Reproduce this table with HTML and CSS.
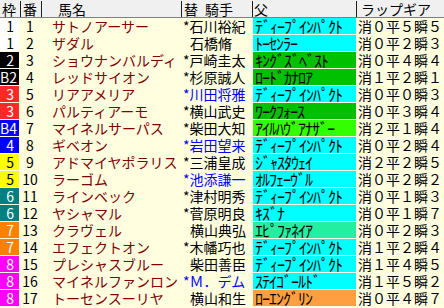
FILE: index.html
```html
<!DOCTYPE html>
<html lang="ja">
<head>
<meta charset="utf-8">
<link rel="stylesheet" href="styles.css">
</head>
<body>
<div class="table">
  <div class="head">
    <div class="h h-waku">枠</div>
    <div class="h h-ban sep">番</div>
    <div class="h h-name sep">馬名</div>
    <div class="h h-jockey sep">替<span class="gap"></span>騎手</div>
    <div class="h h-sire sep">父</div>
    <div class="h h-lap sep">ラップギア</div>
  </div>
  <div class="body">
    <div class="row"><div class="waku w1">1</div><div class="ban">1</div><div class="name">サトノアーサー</div><div class="jockey">*石川裕紀</div><div class="sire cyan">ﾃﾞｨｰﾌﾟｲﾝﾊﾟｸﾄ</div><div class="lap">消０平５瞬５</div></div>
    <div class="row"><div class="waku w1">1</div><div class="ban">2</div><div class="name">ザダル</div><div class="jockey"><span class="sp"></span>石橋脩</div><div class="sire cyan">ﾄｰｾﾝﾗｰ</div><div class="lap">消０平２瞬３</div></div>
    <div class="row"><div class="waku w2">2</div><div class="ban">3</div><div class="name">ショウナンバルディ</div><div class="jockey">*戸崎圭太</div><div class="sire green">ｷﾝｸﾞｽﾞﾍﾞｽﾄ</div><div class="lap">消０平４瞬４</div></div>
    <div class="row"><div class="waku w2">B2</div><div class="ban">4</div><div class="name">レッドサイオン</div><div class="jockey">*杉原誠人</div><div class="sire green">ﾛｰﾄﾞｶﾅﾛｱ</div><div class="lap">消１平２瞬１</div></div>
    <div class="row"><div class="waku w3">3</div><div class="ban">5</div><div class="name">リアアメリア</div><div class="jockey blue">*川田将雅</div><div class="sire cyan">ﾃﾞｨｰﾌﾟｲﾝﾊﾟｸﾄ</div><div class="lap">消０平０瞬３</div></div>
    <div class="row"><div class="waku w3">3</div><div class="ban">6</div><div class="name">パルティアーモ</div><div class="jockey">*横山武史</div><div class="sire green">ﾜｰｸﾌｫｰｽ</div><div class="lap">消０平３瞬４</div></div>
    <div class="row"><div class="waku w4">B4</div><div class="ban">7</div><div class="name">マイネルサーパス</div><div class="jockey">*柴田大知</div><div class="sire lime">ｱｲﾙﾊｳﾞｱﾅｻﾞｰ</div><div class="lap">消２平１瞬４</div></div>
    <div class="row"><div class="waku w4">4</div><div class="ban">8</div><div class="name">ギベオン</div><div class="jockey blue">*岩田望来</div><div class="sire cyan">ﾃﾞｨｰﾌﾟｲﾝﾊﾟｸﾄ</div><div class="lap">消０平２瞬４</div></div>
    <div class="row"><div class="waku w5">5</div><div class="ban">9</div><div class="name">アドマイヤポラリス</div><div class="jockey">*三浦皇成</div><div class="sire cyan">ｼﾞｬｽﾀｳｪｲ</div><div class="lap">消２平２瞬５</div></div>
    <div class="row"><div class="waku w5">5</div><div class="ban">10</div><div class="name">ラーゴム</div><div class="jockey blue">*池添謙一</div><div class="sire cyan">ｵﾙﾌｪｰｳﾞﾙ</div><div class="lap">消０平２瞬２</div></div>
    <div class="row"><div class="waku w6">6</div><div class="ban">11</div><div class="name">ラインベック</div><div class="jockey">*津村明秀</div><div class="sire cyan">ﾃﾞｨｰﾌﾟｲﾝﾊﾟｸﾄ</div><div class="lap">消０平１瞬３</div></div>
    <div class="row"><div class="waku w6">6</div><div class="ban">12</div><div class="name">ヤシャマル</div><div class="jockey">*菅原明良</div><div class="sire cyan">ｷｽﾞﾅ</div><div class="lap">消０平１瞬７</div></div>
    <div class="row"><div class="waku w7">7</div><div class="ban">13</div><div class="name">クラヴェル</div><div class="jockey"><span class="sp"></span>横山典弘</div><div class="sire spring">ｴﾋﾟﾌｧﾈｲｱ</div><div class="lap">消０平２瞬３</div></div>
    <div class="row"><div class="waku w7">7</div><div class="ban">14</div><div class="name">エフェクトオン</div><div class="jockey">*木幡巧也</div><div class="sire cyan">ﾃﾞｨｰﾌﾟｲﾝﾊﾟｸﾄ</div><div class="lap">消１平２瞬４</div></div>
    <div class="row"><div class="waku w8">8</div><div class="ban">15</div><div class="name">プレシャスブルー</div><div class="jockey"><span class="sp"></span>柴田善臣</div><div class="sire cyan">ﾃﾞｨｰﾌﾟｲﾝﾊﾟｸﾄ</div><div class="lap">消１平４瞬５</div></div>
    <div class="row"><div class="waku w8">8</div><div class="ban">16</div><div class="name">マイネルファンロン</div><div class="jockey blue">*Ｍ．デム</div><div class="sire cyan">ｽﾃｲｺﾞｰﾙﾄﾞ</div><div class="lap">消１平５瞬２</div></div>
    <div class="row"><div class="waku w8">8</div><div class="ban">17</div><div class="name">トーセンスーリヤ</div><div class="jockey"><span class="sp"></span>横山和生</div><div class="sire orange">ﾛｰｴﾝｸﾞﾘﾝ</div><div class="lap">消０平４瞬７</div></div>
  </div>
</div>
</body>
</html>
```

FILE: styles.css
```css
* { box-sizing: border-box; }
html, body {
  margin: 0;
  padding: 0;
  background: #ffffe0;
}
body {
  width: 444px;
  height: 308px;
  overflow: hidden;
  font-family: "Noto Sans CJK JP", "Noto Sans", sans-serif;
  font-size: 14px;
  color: #000;
}
.table {
  display: flex;
  flex-direction: column;
}
.head {
  display: grid;
  grid-template-columns: 20px 21px 140px 71px 104px 1fr;
  height: 18px;
  background: #f0f0f0;
  border-bottom: 1px solid #808080;
  align-items: center;
}
.h {
  height: 16px;
  line-height: 16px;
  white-space: nowrap;
}
.sep { border-left: 1px solid #202020; }
.h-waku { padding-left: 2px; }
.h-ban { padding-left: 2px; }
.h-name { padding-left: 16px; }
.h-jockey { padding-left: 2px; }
.h-jockey .gap { display: inline-block; width: 7px; }
.h-sire { padding-left: 1px; }
.h-lap { padding-left: 4px; }

.body {
  display: flex;
  flex-direction: column;
  gap: 1px;
}
.row {
  display: grid;
  grid-template-columns: 20px 21px 140px 71px 104px 1fr;
  height: 16px;
  line-height: 16px;
  white-space: nowrap;
}
.waku {
  width: 19px;
  text-align: right;
  padding-right: 5px;
  color: #fff;
}
.w1 { background: #ffffff; color: #000; }
.w2 { background: #000000; }
.w3 { background: #ff2828; }
.w4 { background: #0000ff; }
.w5 { background: #ffff00; color: #000; }
.w6 { background: #008080; }
.w7 { background: #ff8000; }
.w8 { background: #ff00ff; }
.ban {
  text-align: center;
  padding-right: 1px;
}
.name {
  padding-left: 11px;
  color: #800000;
}
.jockey {
  padding-left: 2px;
}
.jockey .sp { display: inline-block; width: 7px; }
.blue { color: #0000ff; }
.sire {
  margin-left: 1px;
  width: 103px;
  padding-left: 2px;
  font-size: 16px;
  letter-spacing: -1px;
}
.cyan { background: #00ffff; }
.green { background: #00c000; }
.lime { background: #33ff00; }
.spring { background: #22f0a0; }
.orange { background: #ffa040; }
.lap {
  padding-left: 2px;
}
```
